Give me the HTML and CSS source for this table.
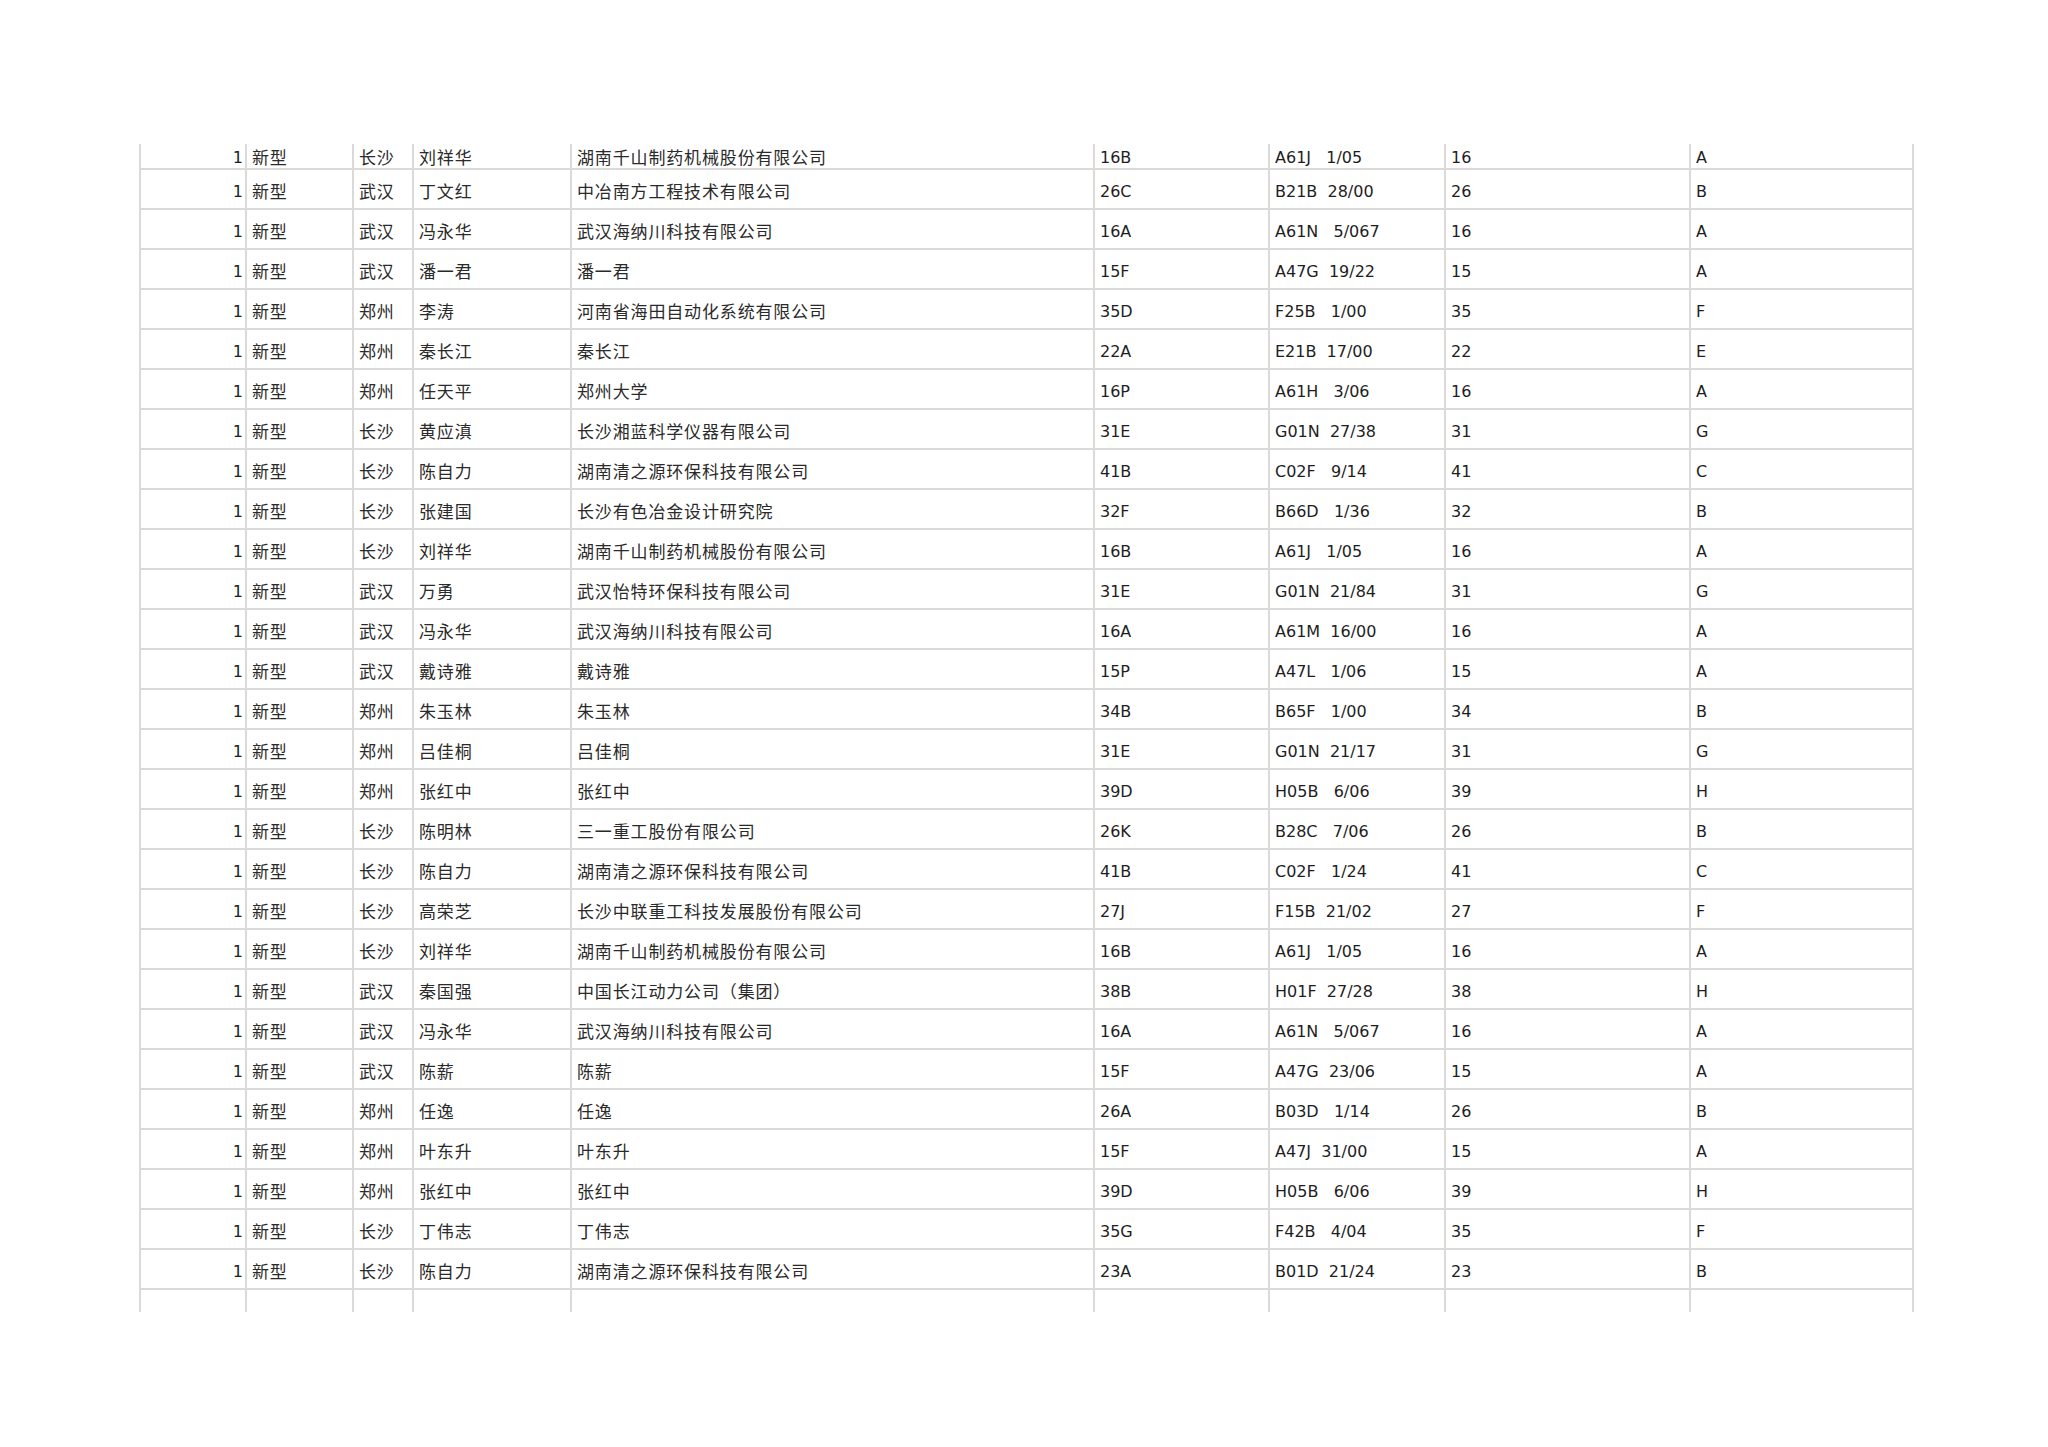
FILE: index.html
```html
<!DOCTYPE html>
<html lang="zh-CN">
<head>
<meta charset="utf-8">
<title>专利列表</title>
<link rel="stylesheet" href="styles.css">
</head>
<body>
<table class="sheet">
<tbody>
<tr class="top"><td>1</td><td class="c">新型</td><td class="c">长沙</td><td class="c">刘祥华</td><td class="c">湖南千山制药机械股份有限公司</td><td>16B</td><td>A61J   1/05</td><td>16</td><td>A</td></tr>
<tr><td>1</td><td class="c">新型</td><td class="c">武汉</td><td class="c">丁文红</td><td class="c">中冶南方工程技术有限公司</td><td>26C</td><td>B21B  28/00</td><td>26</td><td>B</td></tr>
<tr><td>1</td><td class="c">新型</td><td class="c">武汉</td><td class="c">冯永华</td><td class="c">武汉海纳川科技有限公司</td><td>16A</td><td>A61N   5/067</td><td>16</td><td>A</td></tr>
<tr><td>1</td><td class="c">新型</td><td class="c">武汉</td><td class="c">潘一君</td><td class="c">潘一君</td><td>15F</td><td>A47G  19/22</td><td>15</td><td>A</td></tr>
<tr><td>1</td><td class="c">新型</td><td class="c">郑州</td><td class="c">李涛</td><td class="c">河南省海田自动化系统有限公司</td><td>35D</td><td>F25B   1/00</td><td>35</td><td>F</td></tr>
<tr><td>1</td><td class="c">新型</td><td class="c">郑州</td><td class="c">秦长江</td><td class="c">秦长江</td><td>22A</td><td>E21B  17/00</td><td>22</td><td>E</td></tr>
<tr><td>1</td><td class="c">新型</td><td class="c">郑州</td><td class="c">任天平</td><td class="c">郑州大学</td><td>16P</td><td>A61H   3/06</td><td>16</td><td>A</td></tr>
<tr><td>1</td><td class="c">新型</td><td class="c">长沙</td><td class="c">黄应滇</td><td class="c">长沙湘蓝科学仪器有限公司</td><td>31E</td><td>G01N  27/38</td><td>31</td><td>G</td></tr>
<tr><td>1</td><td class="c">新型</td><td class="c">长沙</td><td class="c">陈自力</td><td class="c">湖南清之源环保科技有限公司</td><td>41B</td><td>C02F   9/14</td><td>41</td><td>C</td></tr>
<tr><td>1</td><td class="c">新型</td><td class="c">长沙</td><td class="c">张建国</td><td class="c">长沙有色冶金设计研究院</td><td>32F</td><td>B66D   1/36</td><td>32</td><td>B</td></tr>
<tr><td>1</td><td class="c">新型</td><td class="c">长沙</td><td class="c">刘祥华</td><td class="c">湖南千山制药机械股份有限公司</td><td>16B</td><td>A61J   1/05</td><td>16</td><td>A</td></tr>
<tr><td>1</td><td class="c">新型</td><td class="c">武汉</td><td class="c">万勇</td><td class="c">武汉怡特环保科技有限公司</td><td>31E</td><td>G01N  21/84</td><td>31</td><td>G</td></tr>
<tr><td>1</td><td class="c">新型</td><td class="c">武汉</td><td class="c">冯永华</td><td class="c">武汉海纳川科技有限公司</td><td>16A</td><td>A61M  16/00</td><td>16</td><td>A</td></tr>
<tr><td>1</td><td class="c">新型</td><td class="c">武汉</td><td class="c">戴诗雅</td><td class="c">戴诗雅</td><td>15P</td><td>A47L   1/06</td><td>15</td><td>A</td></tr>
<tr><td>1</td><td class="c">新型</td><td class="c">郑州</td><td class="c">朱玉林</td><td class="c">朱玉林</td><td>34B</td><td>B65F   1/00</td><td>34</td><td>B</td></tr>
<tr><td>1</td><td class="c">新型</td><td class="c">郑州</td><td class="c">吕佳桐</td><td class="c">吕佳桐</td><td>31E</td><td>G01N  21/17</td><td>31</td><td>G</td></tr>
<tr><td>1</td><td class="c">新型</td><td class="c">郑州</td><td class="c">张红中</td><td class="c">张红中</td><td>39D</td><td>H05B   6/06</td><td>39</td><td>H</td></tr>
<tr><td>1</td><td class="c">新型</td><td class="c">长沙</td><td class="c">陈明林</td><td class="c">三一重工股份有限公司</td><td>26K</td><td>B28C   7/06</td><td>26</td><td>B</td></tr>
<tr><td>1</td><td class="c">新型</td><td class="c">长沙</td><td class="c">陈自力</td><td class="c">湖南清之源环保科技有限公司</td><td>41B</td><td>C02F   1/24</td><td>41</td><td>C</td></tr>
<tr><td>1</td><td class="c">新型</td><td class="c">长沙</td><td class="c">高荣芝</td><td class="c">长沙中联重工科技发展股份有限公司</td><td>27J</td><td>F15B  21/02</td><td>27</td><td>F</td></tr>
<tr><td>1</td><td class="c">新型</td><td class="c">长沙</td><td class="c">刘祥华</td><td class="c">湖南千山制药机械股份有限公司</td><td>16B</td><td>A61J   1/05</td><td>16</td><td>A</td></tr>
<tr><td>1</td><td class="c">新型</td><td class="c">武汉</td><td class="c">秦国强</td><td class="c">中国长江动力公司（集团）</td><td>38B</td><td>H01F  27/28</td><td>38</td><td>H</td></tr>
<tr><td>1</td><td class="c">新型</td><td class="c">武汉</td><td class="c">冯永华</td><td class="c">武汉海纳川科技有限公司</td><td>16A</td><td>A61N   5/067</td><td>16</td><td>A</td></tr>
<tr><td>1</td><td class="c">新型</td><td class="c">武汉</td><td class="c">陈薪</td><td class="c">陈薪</td><td>15F</td><td>A47G  23/06</td><td>15</td><td>A</td></tr>
<tr><td>1</td><td class="c">新型</td><td class="c">郑州</td><td class="c">任逸</td><td class="c">任逸</td><td>26A</td><td>B03D   1/14</td><td>26</td><td>B</td></tr>
<tr><td>1</td><td class="c">新型</td><td class="c">郑州</td><td class="c">叶东升</td><td class="c">叶东升</td><td>15F</td><td>A47J  31/00</td><td>15</td><td>A</td></tr>
<tr><td>1</td><td class="c">新型</td><td class="c">郑州</td><td class="c">张红中</td><td class="c">张红中</td><td>39D</td><td>H05B   6/06</td><td>39</td><td>H</td></tr>
<tr><td>1</td><td class="c">新型</td><td class="c">长沙</td><td class="c">丁伟志</td><td class="c">丁伟志</td><td>35G</td><td>F42B   4/04</td><td>35</td><td>F</td></tr>
<tr><td>1</td><td class="c">新型</td><td class="c">长沙</td><td class="c">陈自力</td><td class="c">湖南清之源环保科技有限公司</td><td>23A</td><td>B01D  21/24</td><td>23</td><td>B</td></tr>
<tr class="tail"><td></td><td></td><td></td><td></td><td></td><td></td><td></td><td></td><td></td></tr>
</tbody>
</table>
</body>
</html>
```

FILE: styles.css
```css
html, body {
  margin: 0;
  padding: 0;
  background: #ffffff;
}

.sheet {
  border-collapse: separate;
  border-spacing: 0;
  table-layout: fixed;
  width: 1775px;
  margin: 144px 0 0 139px;
  font-family: "DejaVu Sans", "Noto Sans CJK SC", sans-serif;
  font-size: 16px;
  line-height: 20px;
  color: #1e1e1e;
}

.sheet td {
  box-sizing: border-box;
  height: 40px;
  padding: 0 4px 6px 5px;
  border-right: 2px solid #dbdad8;
  border-bottom: 2px solid #dbdad8;
  vertical-align: bottom;
  white-space: pre;
  overflow: hidden;
}

.sheet td:nth-child(1) { width: 108px; border-left: 2px solid #dbdad8; text-align: right; padding-right: 2px; }
.sheet td:nth-child(2) { width: 107px; }
.sheet td:nth-child(3) { width: 60px; }
.sheet td:nth-child(4) { width: 158px; }
.sheet td:nth-child(5) { width: 523px; }
.sheet td:nth-child(6) { width: 175px; }
.sheet td:nth-child(7) { width: 176px; }
.sheet td:nth-child(8) { width: 245px; }
.sheet td:nth-child(9) { width: 223px; }

.sheet .c {
  font-size: 17px;
  letter-spacing: 0.85px;
  color: #2a2a2a;
}

.sheet tr.top td {
  height: 26px;
  padding-bottom: 0;
}

.sheet tr.tail td {
  height: 22px;
  border-bottom: 0;
}
```
